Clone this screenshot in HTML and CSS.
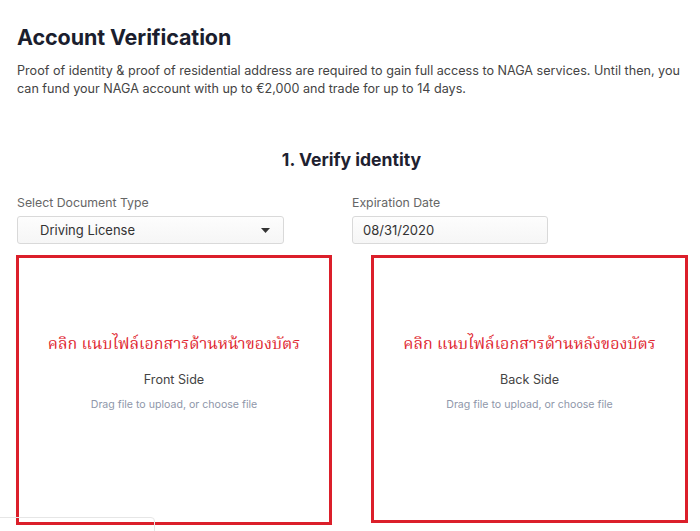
FILE: index.html
```html
<!DOCTYPE html>
<html lang="en">
<head>
<meta charset="utf-8">
<title>Account Verification</title>
<link rel="stylesheet" href="styles.css">
</head>
<body>
<main class="page">
  <h1 class="title">Account Verification</h1>
  <p class="intro">Proof of identity &amp; proof of residential address are required to gain full access to NAGA services. Until then, you can fund your NAGA account with up to €2,000 and trade for up to 14 days.</p>
  <h2 class="step">1. Verify identity</h2>
  <div class="fields">
    <div class="field">
      <label class="label">Select Document Type</label>
      <div class="select">
        <span>Driving License</span>
        <svg class="caret" width="9" height="5" viewBox="0 0 9 5"><path d="M0 0h9L4.5 5z" fill="#333"/></svg>
      </div>
    </div>
    <div class="field">
      <label class="label">Expiration Date</label>
      <div class="input">08/31/2020</div>
    </div>
  </div>
  <div class="uploads">
    <div class="upload upload-front">
      <div class="note" lang="th">คลิก แนบไฟล์เอกสารด้านหน้าของบัตร</div>
      <div class="side">Front Side</div>
      <div class="hint">Drag file to upload, or choose file</div>
    </div>
    <div class="upload upload-back">
      <div class="note" lang="th">คลิก แนบไฟล์เอกสารด้านหลังของบัตร</div>
      <div class="side">Back Side</div>
      <div class="hint">Drag file to upload, or choose file</div>
    </div>
  </div>
  <div class="under-card"></div>
</main>
</body>
</html>
```
FILE: styles.css
```css
* { box-sizing: border-box; }
html, body { margin: 0; padding: 0; background: #fff; }
body {
  font-family: Inter, "Noto Sans", sans-serif;
  color: #333;
  width: 700px;
  height: 531px;
  overflow: hidden;
  position: relative;
}
.page { padding: 24px 0 0 17px; }
.title {
  margin: 0;
  font-size: 21.5px;
  line-height: 27px;
  font-weight: 700;
  color: #1b1e2e;
  letter-spacing: -0.1px;
}
.intro {
  margin: 11px 0 0;
  width: 670px;
  font-size: 12.6px;
  line-height: 18px;
  color: #444;
}
.step {
  margin: 51px 0 0;
  text-align: center;
  font-size: 17.6px;
  line-height: 22px;
  font-weight: 700;
  color: #1e2130;
  padding-right: 14px;
}
.fields {
  display: grid;
  grid-template-columns: 335px 196px;
  margin-top: 24px;
}
.label {
  display: block;
  font-size: 12.3px;
  line-height: 16px;
  color: #666;
  margin-bottom: 5px;
}
.select, .input {
  height: 28px;
  border: 1px solid #d9d9d9;
  border-radius: 3px;
  background: linear-gradient(#fdfdfd, #f6f6f6);
  display: flex;
  align-items: center;
  font-size: 13px;
  color: #333;
}
.select {
  width: 267px;
  padding: 0 13px 0 22px;
  justify-content: space-between;
}
.input { padding: 0 10px; }
.uploads {
  display: flex;
  gap: 39px;
  margin: 11px 0 0 -1px;
}
.upload {
  width: 316px;
  height: 270px;
  border: 3px solid #db1f2a;
  display: flex;
  flex-direction: column;
  align-items: center;
  padding-top: 74px;
  background: #fff;
}
.upload-back { width: 317px; height: 268px; }
.note {
  font-family: "Noto Serif Thai", "Noto Sans Thai", "Loma", "Garuda", serif;
  font-size: 16px;
  line-height: 26px;
  color: #e0262f;
}
.side {
  margin-top: 14px;
  font-size: 12.6px;
  line-height: 16px;
  color: #444;
}
.hint {
  margin-top: 10px;
  font-size: 10.6px;
  line-height: 14px;
  color: #8f97aa;
}
.under-card {
  position: absolute;
  left: -10px;
  top: 517px;
  width: 165px;
  height: 40px;
  border: 1px solid #e6e6e6;
  border-radius: 4px;
  background: transparent;
}
```
